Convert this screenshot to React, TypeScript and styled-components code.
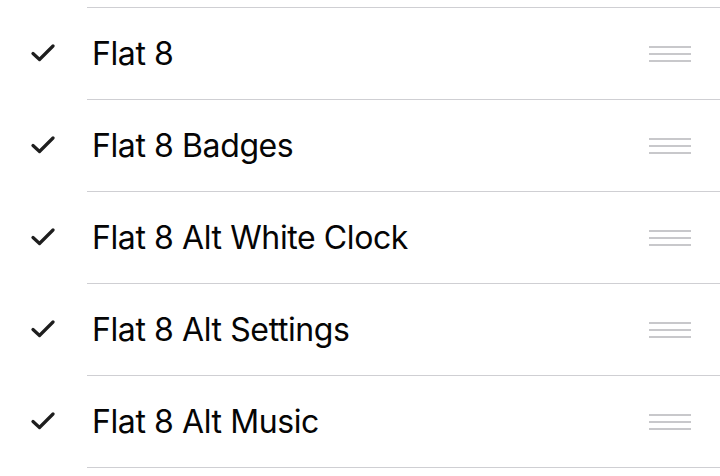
import React from "react";
import styled, { createGlobalStyle } from "styled-components";

const Global = createGlobalStyle`
  html, body { margin: 0; padding: 0; background: #ffffff; }
  body { font-family: "Inter", "Roboto", "Liberation Sans", sans-serif; -webkit-font-smoothing: antialiased; }
`;

const List = styled.div`
  width: 720px;
  height: 476px;
  padding-top: 7px;
  box-sizing: border-box;
  overflow: hidden;
  background: #fff;
`;

const Row = styled.div`
  display: flex;
  height: 92px;
`;

const CheckCell = styled.div`
  width: 87px;
  flex: none;
  display: flex;
  align-items: center;
  padding-left: 31px;
  box-sizing: border-box;
`;

const Content = styled.div<{ $last?: boolean }>`
  flex: 1;
  display: flex;
  align-items: center;
  border-top: 1px solid #cfcfd3;
  border-bottom: ${(p) => (p.$last ? "1px solid #cfcfd3" : "none")};
  padding-right: 29px;
  box-sizing: border-box;
  height: ${(p) => (p.$last ? "93px" : "92px")};
`;

const Label = styled.span`
  flex: 1;
  font-size: 32px;
  color: #050505;
  padding-left: 5px;
  letter-spacing: -0.4px;
`;

const Grip = styled.div`
  width: 42px;
  display: flex;
  flex-direction: column;
  gap: 5px;
  & > span {
    display: block;
    height: 2px;
    background: #c8c8cb;
  }
`;

const Check = () => (
  <svg width="24" height="20" viewBox="0 0 24 20">
    <path d="M2 10.5 L8.5 16.5 L22 3" fill="none" stroke="#1e1e1e" strokeWidth="3.2" strokeLinecap="round" strokeLinejoin="round" />
  </svg>
);

const items = ["Flat 8", "Flat 8 Badges", "Flat 8 Alt White Clock", "Flat 8 Alt Settings", "Flat 8 Alt Music"];

export default function App() {
  return (
    <>
      <Global />
      <List>
        {items.map((t, i) => (
          <Row key={t}>
            <CheckCell>
              <Check />
            </CheckCell>
            <Content $last={i === items.length - 1}>
              <Label>{t}</Label>
              <Grip>
                <span />
                <span />
                <span />
              </Grip>
            </Content>
          </Row>
        ))}
      </List>
    </>
  );
}
